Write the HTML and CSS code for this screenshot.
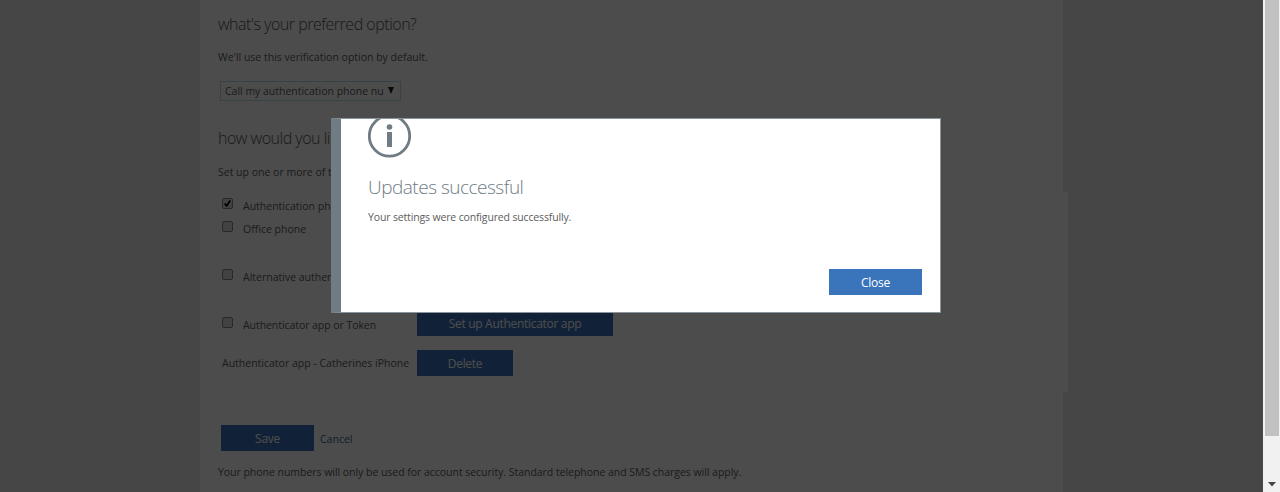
FILE: index.html
```html
<!DOCTYPE html>
<html lang="en">
<head>
<meta charset="utf-8">
<title>Additional security verification</title>
<link rel="stylesheet" href="styles.css">
</head>
<body>
<div class="window">
  <main class="page">
    <div class="panel">
      <h1 class="heading">what's your preferred option?</h1>
      <p class="text text-first">We'll use this verification option by default.</p>
      <div class="select"><span>Call my authentication phone nu</span><svg class="caret" viewBox="0 0 6 7"><path d="M0 0h6L3 7z"/></svg></div>
      <h2 class="heading heading-second">how would you like to respond?</h2>
      <p class="text text-second">Set up one or more of these options.</p>
      <section class="options">
        <div class="option"><span class="box"><svg viewBox="0 0 10 10"><path d="M1.8 5l2.3 2.6L8 1.6" fill="none" stroke="#000" stroke-width="2"/></svg></span><span>Authentication phone</span></div>
        <div class="option option-office"><span class="box"></span><span>Office phone</span></div>
        <div class="option option-alt"><span class="box"></span><span>Alternative authentication phone</span></div>
        <div class="option option-app"><span class="box"></span><span class="label">Authenticator app or Token</span><span class="button button-setup">Set up Authenticator app</span></div>
        <div class="device"><span class="device-name">Authenticator app - Catherines iPhone</span><span class="button button-delete">Delete</span></div>
      </section>
      <div class="actions"><span class="button button-save">Save</span><a class="cancel">Cancel</a></div>
      <p class="text note">Your phone numbers will only be used for account security. Standard telephone and SMS charges will apply.</p>
    </div>
  </main>
  <div class="scrollbar"><div class="thumb"></div><svg class="down" viewBox="0 0 8 5"><path d="M0 0h8L4 4.5z"/></svg></div>
  <div class="overlay">
    <div class="dialog">
      <svg class="info" viewBox="0 0 44 39"><circle cx="21.5" cy="17" r="20.2" fill="none" stroke="#707c84" stroke-width="2.8"/><circle cx="21.5" cy="8" r="2.8" fill="#707c84"/><path d="M19 13h5v15h-5z" fill="#707c84"/></svg>
      <h2 class="dialog-title">Updates successful</h2>
      <p class="dialog-text">Your settings were configured successfully.</p>
      <div class="dialog-actions"><span class="button button-close">Close</span></div>
    </div>
  </div>
</div>
</body>
</html>
```
FILE: styles.css
```css
* { box-sizing: border-box; }
body { margin: 0; font-family: "Open Sans", "Noto Sans", sans-serif; font-size: 10.5px; color: #5c5c5c; }
h1, h2, p { margin: 0; font-weight: 400; }
.window { position: relative; display: flex; width: 1280px; height: 492px; overflow: hidden; }
.page { flex: 1; background: #eaeaea; padding: 0 200px; }
.panel { height: 492px; background: #fff; padding-top: 8px; white-space: nowrap; }
.heading { padding-left: 18px; line-height: 32px; font-size: 16px; font-weight: 300; letter-spacing: -.49px; color: #555; }
.heading-second { margin-top: 21px; }
.text { padding-left: 18px; line-height: 20px; }
.text-first { margin-top: 7px; }
.text-second { margin-top: 8px; }
.select { display: flex; align-items: center; justify-content: space-between; width: 181px; height: 20px; margin: 14px 0 0 20px; padding: 0 6px 1px 4px; border: 1px solid #bcdcec; letter-spacing: -.02px; }
.caret { width: 6px; height: 7px; fill: #222; }
.options { height: 200px; margin: 10px -5px 0 0; padding-top: 3px; background: #fff; }
.option { display: flex; align-items: center; height: 22px; padding-left: 22px; }
.option-office { margin-top: 1px; }
.option-alt { margin-top: 26px; }
.option-app { margin-top: 26px; letter-spacing: -.06px; }
.box { width: 11px; height: 11px; margin: -5px 10px 0 0; border: 1px solid #888; border-radius: 2px; background: #ddd; }
.box svg { display: block; width: 9px; height: 9px; }
.label { width: 174px; }
.button { display: flex; align-items: center; justify-content: center; height: 26px; background: #3a74bb; color: #fff; font-size: 12px; letter-spacing: -.3px; }
.button-setup { width: 196px; margin-top: -4px; }
.device { display: flex; align-items: center; height: 26px; margin-top: 14px; padding-left: 22px; }
.device-name { width: 195px; }
.button-delete { width: 96px; }
.actions { display: flex; align-items: center; margin: 33px 0 0 21px; gap: 6px; }
.button-save { width: 93px; }
.cancel { padding-top: 2px; color: #2f6c8c; }
.note { margin-top: 11px; letter-spacing: -.035px; }
.scrollbar { display: flex; flex-direction: column; justify-content: space-between; align-items: center; width: 17px; height: 492px; padding-bottom: 5px; background: #f1f1f1; }
.thumb { width: 14px; height: 436px; background: #c1c1c1; }
.down { width: 8px; height: 5px; fill: #444; }
.overlay { position: absolute; inset: 0 17px 0 0; padding: 118px 0 0 331px; background: rgba(0, 0, 0, .7); }
.dialog { width: 610px; height: 195px; padding: 0 18px 0 27px; border: 1px solid #8b969c; border-left: 10px solid #707c84; background: #fff; }
.info { display: block; width: 44px; height: 39px; }
.dialog-title { margin-top: 13px; line-height: 32px; font-size: 19px; font-weight: 300; letter-spacing: -.5px; color: #707c84; }
.dialog-text { margin-top: 4px; line-height: 20px; letter-spacing: -.15px; }
.dialog-actions { display: flex; justify-content: flex-end; margin-top: 42px; }
.button-close { width: 93px; }
```
